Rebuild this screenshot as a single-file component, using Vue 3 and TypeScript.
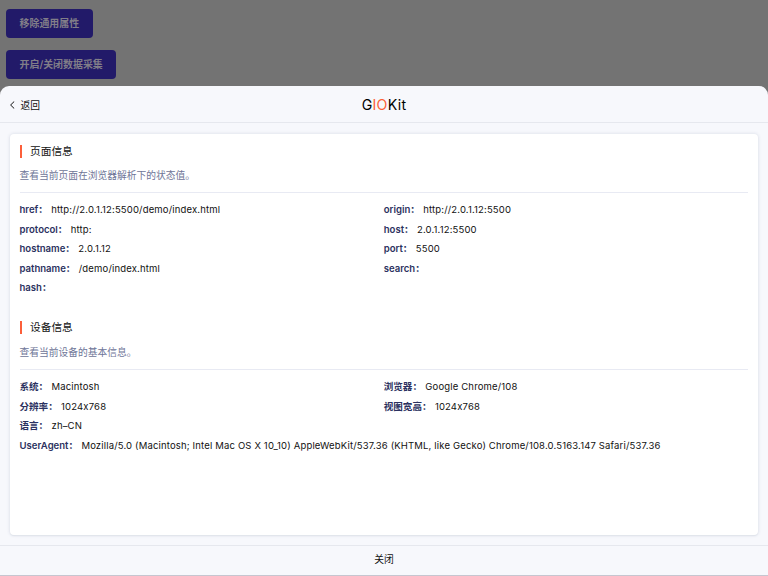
<script setup lang="ts">
interface Item {
  label: string
  value: string
  wide?: boolean
}
interface Section {
  title: string
  description: string
  items: Item[]
}

const actions: string[] = ['移除通用属性', '开启/关闭数据采集']

const sections: Section[] = [
  {
    title: '页面信息',
    description: '查看当前页面在浏览器解析下的状态值。',
    items: [
      { label: 'href', value: 'http://2.0.1.12:5500/demo/index.html' },
      { label: 'origin', value: 'http://2.0.1.12:5500' },
      { label: 'protocol', value: 'http:' },
      { label: 'host', value: '2.0.1.12:5500' },
      { label: 'hostname', value: '2.0.1.12' },
      { label: 'port', value: '5500' },
      { label: 'pathname', value: '/demo/index.html' },
      { label: 'search', value: '' },
      { label: 'hash', value: '' },
    ],
  },
  {
    title: '设备信息',
    description: '查看当前设备的基本信息。',
    items: [
      { label: '系统', value: 'Macintosh' },
      { label: '浏览器', value: 'Google Chrome/108' },
      { label: '分辨率', value: '1024x768' },
      { label: '视图宽高', value: '1024x768' },
      { label: '语言', value: 'zh–CN', wide: true },
      {
        label: 'UserAgent',
        value:
          'Mozilla/5.0 (Macintosh; Intel Mac OS X 10_10) AppleWebKit/537.36 (KHTML, like Gecko) Chrome/108.0.5163.147 Safari/537.36',
        wide: true,
      },
    ],
  },
]
</script>

<template>
  <div class="page">
    <div class="actions">
      <button v-for="action in actions" :key="action" class="action">{{ action }}</button>
    </div>
    <section class="sheet">
      <header class="header">
        <div class="back">
          <svg class="chevron" viewBox="0 0 6 8" fill="none" stroke="#111" stroke-width="1">
            <path d="M5.2 0.5 L1.6 4 L5.2 7.5" />
          </svg>
          <span>返回</span>
        </div>
        <h1 class="brand">G<span class="accent">IO</span>Kit</h1>
      </header>
      <main class="body">
        <div class="card">
          <section v-for="section in sections" :key="section.title" class="section">
            <h2 class="title">{{ section.title }}</h2>
            <p class="description">{{ section.description }}</p>
            <dl class="items">
              <div v-for="item in section.items" :key="item.label" class="item" :class="{ wide: item.wide }">
                <dt>{{ item.label }}：</dt>
                <dd>{{ item.value }}</dd>
              </div>
            </dl>
          </section>
        </div>
      </main>
      <footer class="footer">关闭</footer>
    </section>
  </div>
</template>

<style>
body {
  overflow: hidden;
}
</style>

<style scoped>
.page {
  display: flex;
  flex-direction: column;
  width: 768px;
  height: 576px;
  box-sizing: border-box;
  background: #737373;
  font-family: Inter, "Noto Sans CJK SC", sans-serif;
  font-size: 9.75px;
  font-feature-settings: "calt" 0;
  color: #111;
}
.actions {
  display: flex;
  flex-direction: column;
  align-items: flex-start;
  gap: 12px;
  height: 86px;
  box-sizing: border-box;
  padding: 8.5px 6px 0;
}
.action {
  height: 29.3px;
  flex: none;
  padding: 0 13.5px;
  border: 0;
  border-radius: 4px;
  background: #221a69;
  color: #817e88;
  font-family: inherit;
  font-size: 9.95px;
  font-weight: 600;
  line-height: 29px;
}
.sheet {
  display: flex;
  flex-direction: column;
  height: 490px;
  box-sizing: border-box;
  border-bottom: 1px solid #c6c6d0;
  border-radius: 9px 9px 0 0;
  background: #f7f8fc;
}
.header {
  display: grid;
  grid-template-columns: 1fr auto 1fr;
  align-items: center;
  height: 37px;
  box-sizing: border-box;
  padding: 0 9px;
  border-bottom: 1px solid #e6e8ee;
}
.back {
  display: flex;
  align-items: center;
  gap: 5.4px;
  padding-top: 2px;
}
.chevron {
  width: 6px;
  height: 8px;
}
.brand {
  margin: 0;
  padding-top: 2px;
  font-size: 14.2px;
  font-weight: 400;
  letter-spacing: 0.25px;
  line-height: 18px;
  color: #000;
}
.accent {
  color: #fc5f3a;
}
.body {
  flex: 1;
  min-height: 0;
  padding: 11px 10px 10px;
}
.card {
  height: 100%;
  box-sizing: border-box;
  padding: 10.6px 10px 0 9.5px;
  border-radius: 4px;
  background: #fff;
  box-shadow: 0 0 3px 1px #e3e6ee, 0 1px 1px #dce1e7;
}
.section {
  height: 176.8px;
}
.title {
  margin: 0;
  height: 13px;
  padding-left: 8.5px;
  border-left: 2px solid #fc5f3a;
  font-size: 10.7px;
  font-weight: 400;
  line-height: 13px;
}
.description {
  margin: 0;
  height: 35.5px;
  box-sizing: border-box;
  padding-top: 10.4px;
  border-bottom: 1px solid #e8eaf3;
  color: #6e7597;
  line-height: 16px;
}
.items {
  display: grid;
  grid-template-columns: 1fr 1fr;
  grid-auto-rows: 19.5px;
  margin: 0;
  padding-top: 7.3px;
}
.item {
  display: flex;
  align-items: center;
  white-space: nowrap;
  line-height: 19.5px;
}
.wide {
  grid-column: 1 / -1;
}
dt {
  color: #2b3160;
  font-size: 9.55px;
  font-weight: 600;
}
dd {
  margin: 0 0 0 3.4px;
  font-size: 9.5px;
  letter-spacing: 0.16px;
}
.footer {
  height: 30px;
  box-sizing: border-box;
  border-top: 1px solid #e6e8ee;
  line-height: 28px;
  text-align: center;
}
</style>
